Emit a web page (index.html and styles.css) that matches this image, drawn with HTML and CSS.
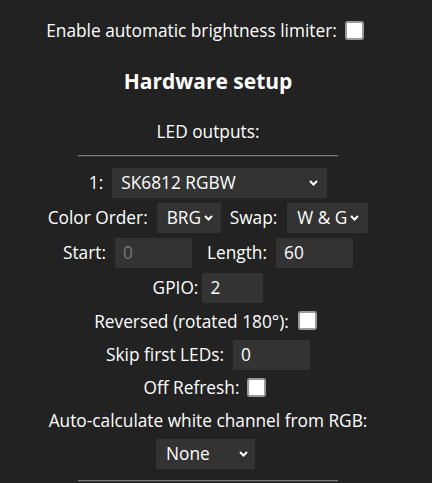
FILE: index.html
```html
<!DOCTYPE html>
<html lang="en">
<head>
<meta charset="utf-8">
<title>LED Settings</title>
<link rel="stylesheet" href="styles.css">
</head>
<body>
<main class="page">
  <div class="row r-line"><span>Enable automatic brightness limiter:</span><input type="checkbox" class="cb cb-enable"></div>
  <h3 class="title">Hardware setup</h3>
  <div class="row r-text">LED outputs:</div>
  <hr class="sep">
  <div class="row r-ctl">
    <span>1:</span>
    <span class="selwrap sw-type"><select class="sel"><option>SK6812 RGBW</option></select><svg class="chev" viewBox="0 0 9 6" width="9" height="6"><path d="M1 1 L4.5 4.5 L8 1" fill="none" stroke="#fff" stroke-width="2"/></svg></span>
  </div>
  <div class="row r-ctl">
    <span>Color Order:</span>
    <span class="selwrap sw-co"><select class="sel"><option>BRG</option></select><svg class="chev" viewBox="0 0 9 6" width="9" height="6"><path d="M1 1 L4.5 4.5 L8 1" fill="none" stroke="#fff" stroke-width="2"/></svg></span>
    <span class="lbl-swap">Swap:</span>
    <span class="selwrap sw-swap"><select class="sel"><option>W &amp; G</option></select><svg class="chev" viewBox="0 0 9 6" width="9" height="6"><path d="M1 1 L4.5 4.5 L8 1" fill="none" stroke="#fff" stroke-width="2"/></svg></span>
  </div>
  <div class="row r-ctl">
    <span>Start:</span>
    <input class="num in-start" type="text" value="0" disabled>
    <span class="lbl-len">Length:</span>
    <input class="num in-len" type="text" value="60">
  </div>
  <div class="row r-ctl">
    <span>GPIO:</span>
    <input class="num in-gpio" type="text" value="2">
  </div>
  <div class="row r-sm"><span>Reversed (rotated 180°):</span><input type="checkbox" class="cb cb-rev"></div>
  <div class="row r-sm"><span>Skip first LEDs:</span><input class="num in-skip" type="text" value="0"></div>
  <div class="row r-sm"><span>Off Refresh:</span><input type="checkbox" class="cb cb-off"></div>
  <div class="row r-sm"><span>Auto-calculate white channel from RGB:</span></div>
  <div class="row r-sm">
    <span class="selwrap sw-none"><select class="sel"><option>None</option></select><svg class="chev" viewBox="0 0 9 6" width="9" height="6"><path d="M1 1 L4.5 4.5 L8 1" fill="none" stroke="#fff" stroke-width="2"/></svg></span>
  </div>
  <hr class="sep sep-end">
</main>
</body>
</html>
```

FILE: styles.css
```css
html, body {
  margin: 0;
  background: #222;
}
body {
  font-family: "Open Sans", "Noto Sans", sans-serif;
  font-size: 17.3px;
  color: #fff;
  overflow: hidden;
}
.page {
  width: 416px;
  display: flex;
  flex-direction: column;
  align-items: center;
  padding-top: 13px;
}
.row {
  display: flex;
  align-items: center;
  justify-content: center;
  white-space: nowrap;
}
.r-line { height: 34px; }
.r-text { height: 32px; }
.r-ctl { height: 35px; }
.r-sm { height: 33px; }
.title {
  margin: 0;
  height: 68px;
  display: flex;
  align-items: center;
  font-size: 21px;
  font-weight: 700;
}
.sep {
  width: 260px;
  height: 0;
  margin: 8px 0;
  border: none;
  border-top: 1px solid #7a7a7a;
  border-bottom: 1px solid #3a3a3a;
}
.sep-end { margin-top: 10px; }

.cb {
  appearance: none;
  -webkit-appearance: none;
  box-sizing: border-box;
  width: 19px;
  height: 19px;
  margin: 0;
  background: #fff;
  border: 2px solid #9a9a9a;
  border-radius: 3px;
}
.cb-enable { margin-left: 8px; margin-right: 6px; }
.cb-rev { margin-left: 9px; margin-right: 5px; margin-top: -3px; }
.cb-off { margin-left: 8px; margin-right: 6px; }

.selwrap {
  position: relative;
  display: inline-flex;
  height: 30px;
}
.sel {
  appearance: none;
  -webkit-appearance: none;
  box-sizing: border-box;
  height: 30px;
  margin: 0;
  padding: 0 0 0 9px;
  border: none;
  border-radius: 0;
  background: #333;
  color: #fff;
  font-family: inherit;
  font-size: 17.3px;
  outline: none;
}
.chev {
  position: absolute;
  right: 9px;
  top: 12px;
  pointer-events: none;
}
.sw-type { margin-left: 9px; }
.sw-type .sel { width: 215px; }
.sw-co { margin-left: 9px; }
.sw-co .sel { width: 64px; padding-left: 10px; }
.sw-co .chev { right: 8px; }
.lbl-swap { margin-left: 9px; }
.sw-swap { margin-left: 10px; }
.sw-swap .sel { width: 81px; padding-left: 10px; }
.sw-none { margin-right: 5px; }
.sw-none .sel { width: 99px; padding-left: 10px; }
.sw-none .chev { right: 7px; }

.num {
  box-sizing: border-box;
  height: 30px;
  margin: 0;
  padding: 0 0 0 8px;
  border: none;
  background: #333;
  color: #fff;
  font-family: inherit;
  font-size: 17.3px;
  outline: none;
}
.num:disabled { color: #777; }
.in-start { width: 77px; margin-left: 9px; }
.lbl-len { margin-left: 15px; }
.in-len { width: 77px; margin-left: 9px; }
.in-gpio { width: 61px; margin-left: 4px; }
.in-skip { width: 77px; margin-left: 9px; }
```
